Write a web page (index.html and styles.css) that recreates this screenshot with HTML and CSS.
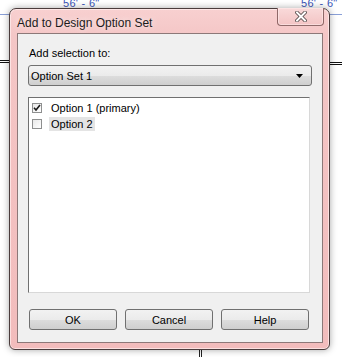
FILE: index.html
```html
<!DOCTYPE html>
<html>
<head>
<meta charset="utf-8">
<link rel="stylesheet" href="styles.css">
</head>
<body>
<div class="canvas">
  <span class="dim dim-left">56' - 6"</span>
  <span class="dim dim-right">56' - 6"</span>
  <div class="bline bline-left"></div>
  <div class="bline bline-right"></div>
  <div class="wall wall-left"></div>
  <div class="wall wall-right"></div>
  <div class="wall-v"></div>

  <div class="window">
    <div class="titlebar">
      <span class="title">Add to Design Option Set</span>
      <div class="close">
        <svg width="12" height="11" viewBox="0 0 12 11">
          <path d="M2 1.5 L10 9.5 M10 1.5 L2 9.5" stroke="#4a4040" stroke-width="3.6" stroke-linecap="square"/>
          <path d="M2 1.5 L10 9.5 M10 1.5 L2 9.5" stroke="#ffffff" stroke-width="2" stroke-linecap="square"/>
        </svg>
      </div>
    </div>
    <div class="client">
      <div class="label">Add selection to:</div>
      <div class="combo">
        <span class="combo-text">Option Set 1</span>
        <svg class="arrow" width="7" height="4" viewBox="0 0 7 4"><path d="M0 0 H7 L3.5 4 Z" fill="#000"/></svg>
      </div>
      <div class="list">
        <div class="row">
          <span class="check">
            <svg width="8" height="8" viewBox="0 0 8 8"><path d="M1 3.8 L3 6 L7 1" stroke="#1a1a1a" stroke-width="1.6" fill="none"/></svg>
          </span>
          <span class="item">Option 1 (primary)</span>
        </div>
        <div class="row">
          <span class="check"></span>
          <span class="item selected">Option 2</span>
        </div>
      </div>
      <div class="buttons">
        <div class="btn">OK</div>
        <div class="btn">Cancel</div>
        <div class="btn">Help</div>
      </div>
    </div>
  </div>
</div>
</body>
</html>
```

FILE: styles.css
```css
html, body {
  margin: 0;
  padding: 0;
  background: #ffffff;
}
.canvas {
  position: relative;
  width: 342px;
  height: 357px;
  overflow: hidden;
  background: #ffffff;
  padding-top: 8px;
  padding-left: 9px;
  box-sizing: border-box;
  font-family: "Liberation Sans", Arial, sans-serif;
}
.dim {
  position: absolute;
  top: -3px;
  font-size: 11px;
  line-height: 12px;
  color: #3a55b8;
  font-family: "Liberation Sans", Arial, sans-serif;
  letter-spacing: 0.3px;
}
.dim-left { left: 63px; }
.dim-right { left: 301px; }
.bline {
  position: absolute;
  top: 14px;
  height: 1px;
  background: #8aa0d8;
}
.bline-left { left: 0; width: 12px; }
.bline-right { left: 326px; width: 16px; }
.wall {
  position: absolute;
  height: 1px;
  border-top: 1px solid #111;
  border-bottom: 1px solid #111;
}
.wall-left { left: 0; width: 10px; top: 60px; }
.wall-right { left: 328px; width: 14px; top: 62px; }
.wall-v {
  position: absolute;
  left: 199px;
  top: 346px;
  width: 1px;
  height: 12px;
  border-left: 1px solid #222;
  border-right: 1px solid #222;
}

.window {
  position: relative;
  width: 321px;
  height: 342px;
  box-sizing: border-box;
  border: 1px solid #4a3c3c;
  border-radius: 7px 7px 6px 6px;
  background: linear-gradient(180deg, #f8d0d0 0%, #f4c6c6 8%, #f2bcbc 100%);
  box-shadow: 0 0 7px rgba(0, 0, 0, 0.35), inset 0 0 0 1px rgba(255, 240, 240, 0.7);
  padding: 0 6px 6px 7px;
  display: flex;
  flex-direction: column;
}
.titlebar {
  height: 24px;
  display: flex;
  align-items: flex-start;
  justify-content: space-between;
}
.title {
  margin-top: 7px;
  font-size: 12px;
  color: #1c1c1c;
  font-family: "Liberation Sans", Arial, sans-serif;
  text-shadow: 0 0 6px rgba(255, 255, 255, 0.9);
}
.close {
  margin-top: -1px;
  width: 47px;
  height: 18px;
  box-sizing: border-box;
  border: 1px solid rgba(100, 60, 60, 0.7);
  border-top: none;
  border-radius: 0 0 4px 4px;
  background: linear-gradient(180deg, #f9dada, #f3c4c4);
  box-shadow: inset 0 0 0 1px rgba(255, 235, 235, 0.6);
  display: flex;
  align-items: center;
  justify-content: center;
  margin-right: -1px;
}
.client {
  flex: 1;
  background: #f0f0f0;
  border: 1px solid #8c7878;
  padding: 13px 10px 0 10px;
  display: flex;
  flex-direction: column;
}
.label {
  font-size: 11px;
  line-height: 13px;
  color: #000;
  padding-left: 1px;
}
.combo {
  margin-top: 5px;
  height: 21px;
  box-sizing: border-box;
  border: 1px solid #707070;
  border-radius: 3px;
  background: linear-gradient(180deg, #f2f2f2 0%, #ebebeb 50%, #dddddd 51%, #cfcfcf 100%);
  display: flex;
  align-items: center;
  justify-content: space-between;
  padding: 0 8px 0 2px;
}
.combo-text {
  font-size: 11px;
  color: #000;
}
.list {
  margin-top: 11px;
  width: 282px;
  height: 196px;
  box-sizing: border-box;
  border: 1px solid;
  border-color: #707070 #d8d8d8 #d8d8d8 #707070;
  background: #ffffff;
  padding: 3px 3px;
}
.row {
  height: 16px;
  display: flex;
  align-items: flex-start;
}
.check {
  margin-top: 2px;
  width: 10px;
  height: 10px;
  box-sizing: border-box;
  border: 1px solid #8e8f8f;
  background: linear-gradient(135deg, #e8e8e8, #ffffff);
  display: flex;
  align-items: center;
  justify-content: center;
}
.item {
  margin-left: 7px;
  padding: 0 2px;
  height: 14px;
  line-height: 14px;
  font-size: 11px;
  color: #000;
}
.selected {
  background: #e4e4e4;
}
.buttons {
  margin-top: 16px;
  display: flex;
  gap: 8px;
  padding-left: 1px;
}
.btn {
  width: 88px;
  height: 21px;
  box-sizing: border-box;
  border: 1px solid #707070;
  border-radius: 3px;
  background: linear-gradient(180deg, #f2f2f2 0%, #ebebeb 50%, #dddddd 51%, #cfcfcf 100%);
  font-size: 11px;
  color: #000;
  display: flex;
  align-items: center;
  justify-content: center;
}
```
